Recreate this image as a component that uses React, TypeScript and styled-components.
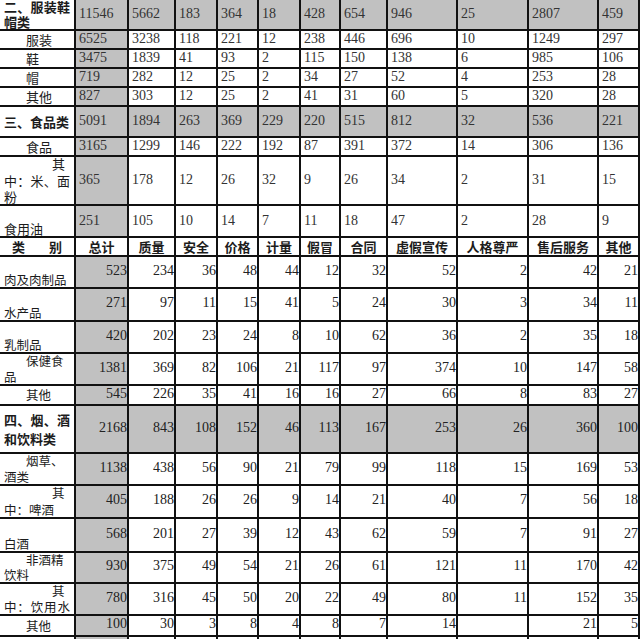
import styled, { createGlobalStyle, css } from "styled-components";

const GlobalStyle = createGlobalStyle`
    html, body {
        margin: 0;
        padding: 0;
        overflow: hidden;
        background: #ffffff;
    }
`;

const COLS = [76, 53, 47, 42, 41, 42, 40, 47, 70, 71, 70, 41];

type Align = "left" | "indent" | "deep" | "justify" | "spread";
type Line = { text: string; align?: Align };
type VAlign = "center" | "end" | "between";

type DataRow = {
    lines: Line[];
    nums: (number | string)[];
    h: number;
    bold?: boolean;
    band?: boolean;
    valign?: VAlign;
    gap?: number;
};

const topRows: DataRow[] = [
    {
        lines: [{ text: "二、服装鞋", align: "justify" }, { text: "帽类" }],
        nums: [11546, 5662, 183, 364, 18, 428, 654, 946, 25, 2807, 459],
        h: 31,
        bold: true,
        band: true,
        valign: "between",
    },
    { lines: [{ text: "服装", align: "indent" }], nums: [6525, 3238, 118, 221, 12, 238, 446, 696, 10, 1249, 297], h: 19 },
    { lines: [{ text: "鞋", align: "indent" }], nums: [3475, 1839, 41, 93, 2, 115, 150, 138, 6, 985, 106], h: 19 },
    { lines: [{ text: "帽", align: "indent" }], nums: [719, 282, 12, 25, 2, 34, 27, 52, 4, 253, 28], h: 19 },
    { lines: [{ text: "其他", align: "indent" }], nums: [827, 303, 12, 25, 2, 41, 31, 60, 5, 320, 28], h: 19 },
    {
        lines: [{ text: "三、食品类" }],
        nums: [5091, 1894, 263, 369, 229, 220, 515, 812, 32, 536, 221],
        h: 31,
        bold: true,
        band: true,
    },
    { lines: [{ text: "食品", align: "indent" }], nums: [3165, 1299, 146, 222, 192, 87, 391, 372, 14, 306, 136], h: 19 },
    {
        lines: [{ text: "其", align: "deep" }, { text: "中：米、面", align: "justify" }, { text: "粉" }],
        nums: [365, 178, 12, 26, 32, 9, 26, 34, 2, 31, 15],
        h: 49,
        valign: "between",
    },
    { lines: [{ text: "食用油" }], nums: [251, 105, 10, 14, 7, 11, 18, 47, 2, 28, 9], h: 32, valign: "end" },
];

const headers = ["总计", "质量", "安全", "价格", "计量", "假冒", "合同", "虚假宣传", "人格尊严", "售后服务", "其他"];

const bottomRows: DataRow[] = [
    { lines: [{ text: "肉及肉制品" }], nums: [523, 234, 36, 48, 44, 12, 32, 52, 2, 42, 21], h: 32, valign: "end" },
    { lines: [{ text: "水产品" }], nums: [271, 97, 11, 15, 41, 5, 24, 30, 3, 34, 11], h: 33, valign: "end" },
    { lines: [{ text: "乳制品" }], nums: [420, 202, 23, 24, 8, 10, 62, 36, 2, 35, 18], h: 32, valign: "end" },
    {
        lines: [{ text: "保健食", align: "indent" }, { text: "品" }],
        nums: [1381, 369, 82, 106, 21, 117, 97, 374, 10, 147, 58],
        h: 32,
        valign: "between",
    },
    { lines: [{ text: "其他", align: "indent" }], nums: [545, 226, 35, 41, 16, 16, 27, 66, 8, 83, 27], h: 20 },
    {
        lines: [{ text: "四、烟、酒", align: "justify" }, { text: "和饮料类" }],
        nums: [2168, 843, 108, 152, 46, 113, 167, 253, 26, 360, 100],
        h: 48,
        bold: true,
        band: true,
        gap: 5,
    },
    {
        lines: [{ text: "烟草、", align: "indent" }, { text: "酒类" }],
        nums: [1138, 438, 56, 90, 21, 79, 99, 118, 15, 169, 53],
        h: 32,
        valign: "between",
    },
    {
        lines: [{ text: "其", align: "deep" }, { text: "中：啤酒" }],
        nums: [405, 188, 26, 26, 9, 14, 21, 40, 7, 56, 18],
        h: 33,
        valign: "between",
    },
    { lines: [{ text: "白酒" }], nums: [568, 201, 27, 39, 12, 43, 62, 59, 7, 91, 27], h: 34, valign: "end" },
    {
        lines: [{ text: "非酒精", align: "indent" }, { text: "饮料" }],
        nums: [930, 375, 49, 54, 21, 26, 61, 121, 11, 170, 42],
        h: 31,
        valign: "between",
    },
    {
        lines: [{ text: "其", align: "deep" }, { text: "中：饮用水", align: "justify" }],
        nums: [780, 316, 45, 50, 20, 22, 49, 80, 11, 152, 35],
        h: 32,
        valign: "between",
    },
    { lines: [{ text: "其他", align: "indent" }], nums: [100, 30, 3, 8, 4, 8, 7, 14, "", 21, 5], h: 21 },
];

export default function App() {
    return (
        <>
            <GlobalStyle />
            <Sheet>
                {topRows.map((row, i) => (
                    <Row key={`t${i}`} $h={row.h}>
                        <LabelCell
                            $valign={row.valign ?? "center"}
                            $bold={row.bold}
                            $size={13}
                            $gap={row.gap ?? 0}
                        >
                            {row.lines.map((l, j) => (
                                <LabelLine key={j} $align={l.align ?? "left"}>
                                    {l.text}
                                </LabelLine>
                            ))}
                        </LabelCell>
                        {row.nums.map((n, j) => (
                            <NumCell key={j} $shade={row.band || j === 0} $side="left">
                                {n}
                            </NumCell>
                        ))}
                    </Row>
                ))}

                <Row $h={19}>
                    <HeadCell>
                        <LabelLine $align="spread">类别</LabelLine>
                    </HeadCell>
                    {headers.map((h) => (
                        <HeadCell key={h}>{h}</HeadCell>
                    ))}
                </Row>

                {bottomRows.map((row, i) => (
                    <Row key={`b${i}`} $h={row.h}>
                        <LabelCell
                            $valign={row.valign ?? "center"}
                            $bold={row.bold}
                            $size={row.bold ? 13 : 12.5}
                            $gap={row.gap ?? 0}
                        >
                            {row.lines.map((l, j) => (
                                <LabelLine key={j} $align={l.align ?? "left"}>
                                    {l.text}
                                </LabelLine>
                            ))}
                        </LabelCell>
                        {row.nums.map((n, j) => (
                            <NumCell key={j} $shade={row.band || j === 0} $side="right">
                                {n}
                            </NumCell>
                        ))}
                    </Row>
                ))}

                <Row $h={12}>
                    <LabelCell $valign="center" $size={12.5} $gap={0} />
                    {headers.map((h, j) => (
                        <NumCell key={h} $shade={j === 0} $side="right" />
                    ))}
                </Row>
            </Sheet>
        </>
    );
}

const Sheet = styled.div`
    width: 640px;
    display: flex;
    flex-direction: column;
    color: #1c1c1c;
`;

const Row = styled.div<{ $h: number }>`
    display: grid;
    grid-template-columns: ${COLS.map((c) => `${c}px`).join(" ")};
    height: ${({ $h }) => $h}px;
`;

const cellBase = css`
    box-sizing: border-box;
    border-right: 2px solid #111;
    border-bottom: 2px solid #111;
    min-width: 0;
`;

const LabelCell = styled.div<{ $valign: VAlign; $bold?: boolean; $size: number; $gap: number }>`
    ${cellBase};
    display: flex;
    flex-direction: column;
    justify-content: ${({ $valign }) =>
        $valign === "end" ? "flex-end" : $valign === "between" ? "space-between" : "center"};
    row-gap: ${({ $gap }) => $gap}px;
    padding: 0 4px;
    font-family: "Noto Sans CJK SC", "Noto Sans", sans-serif;
    font-size: ${({ $size }) => $size}px;
    font-weight: ${({ $bold }) => ($bold ? 700 : 400)};
    line-height: 14px;
    white-space: nowrap;
`;

const LabelLine = styled.span<{ $align: Align }>`
    display: block;
    ${({ $align }) => {
        switch ($align) {
            case "indent":
                return css`
                    padding-left: 22px;
                `;
            case "deep":
                return css`
                    padding-left: 48px;
                `;
            case "justify":
                return css`
                    text-align: justify;
                    text-align-last: justify;
                `;
            case "spread":
                return css`
                    text-align: justify;
                    text-align-last: justify;
                    padding: 0 12px;
                `;
            default:
                return css`
                    text-align: left;
                `;
        }
    }}
`;

const HeadCell = styled.div`
    ${cellBase};
    display: flex;
    flex-direction: column;
    justify-content: center;
    text-align: center;
    font-family: "Noto Sans CJK SC", "Noto Sans", sans-serif;
    font-size: 13px;
    font-weight: 700;
    line-height: 15px;
    white-space: nowrap;
`;

const NumCell = styled.div<{ $shade?: boolean; $side: "left" | "right" }>`
    ${cellBase};
    overflow: hidden;
    display: flex;
    align-items: center;
    justify-content: ${({ $side }) => ($side === "left" ? "flex-start" : "flex-end")};
    padding: ${({ $side }) => ($side === "left" ? "0 0 1px 3px" : "0 0 3px 0")};
    background: ${({ $shade }) => ($shade ? "#c1c1c1" : "#ffffff")};
    font-family: "Liberation Serif", "Times New Roman", serif;
    font-size: 14px;
    color: ${({ $side }) => ($side === "left" ? "#333" : "#222")};
`;
